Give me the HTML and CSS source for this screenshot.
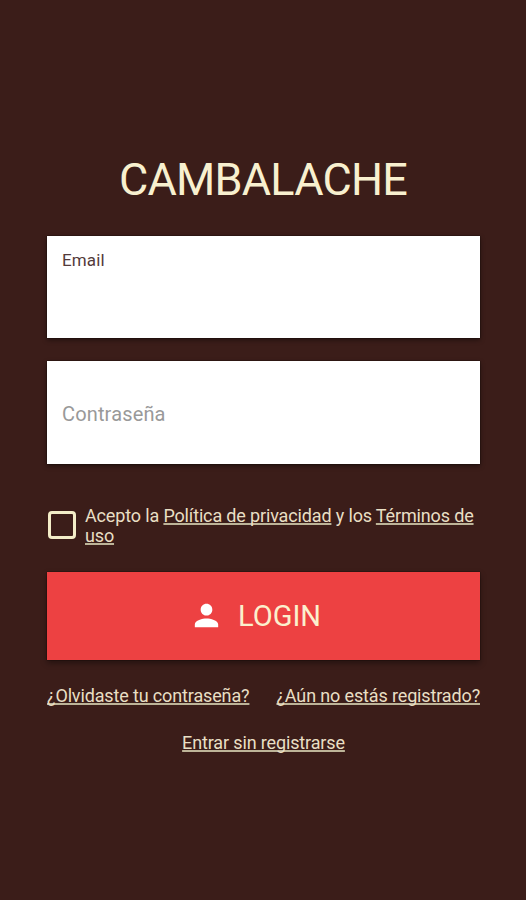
FILE: index.html
```html
<!DOCTYPE html>
<html lang="es">
<head>
<meta charset="utf-8">
<title>Cambalache</title>
<link rel="stylesheet" href="styles.css">
</head>
<body>
<main class="login">
  <h1 class="title">CAMBALACHE</h1>
  <div class="field"><label class="field-label">Email</label></div>
  <div class="field field-empty"><span class="placeholder">Contraseña</span></div>
  <div class="terms">
    <span class="checkbox"></span>
    <p class="terms-text">Acepto la <a>Política de privacidad</a> y los <a>Términos de<br>uso</a></p>
  </div>
  <button class="submit">
    <svg class="person" viewBox="0 0 24 24"><path d="M12 12c2.210 0 4-1.790 4-4s-1.790-4-4-4-4 1.790-4 4 1.790 4 4 4zm0 2c-2.670 0-8 1.340-8 4v2h16v-2c0-2.660-5.330-4-8-4z"/></svg>
    <span>LOGIN</span>
  </button>
  <nav class="links"><a>¿Olvidaste tu contraseña?</a><a>¿Aún no estás registrado?</a></nav>
  <nav class="guest"><a>Entrar sin registrarse</a></nav>
</main>
</body>
</html>
```
FILE: styles.css
```css
* { box-sizing: border-box; }
body {
  margin: 0;
  min-height: 900px;
  background: #3b1d19;
  color: #f8f0cf;
  font-family: Roboto, sans-serif;
}
.login { padding: 152px 46px 0 47px; }
.title {
  margin: 0 0 28px;
  padding-right: 1px;
  font-size: 45px;
  line-height: 56px;
  font-weight: 400;
  letter-spacing: -.8px;
  text-align: center;
}
.field {
  height: 102px;
  margin-bottom: 23px;
  padding: 15px;
  background: #fff;
  box-shadow: 0 2px 5px rgba(0, 0, 0, .45), 0 0 1px #000;
}
.field-label { display: block; margin-top: -1px; font-size: 17px; line-height: 20px; letter-spacing: .15px; color: #533a3b; }
.field-empty { display: flex; align-items: center; height: 103px; margin-bottom: 42px; }
.placeholder { font-size: 20px; letter-spacing: .15px; color: #999; padding-top: 2px; }
.terms { display: flex; align-items: center; gap: 9px; padding-left: 1px; height: 40px; }
.checkbox { flex: none; width: 28px; height: 28px; margin-top: -2px; border: 3px solid #f3edc8; border-radius: 4px; }
.terms-text { margin: 0; font-size: 18px; line-height: 20px; letter-spacing: -.15px; color: #e9dfc4; white-space: nowrap; }
a {
  color: #e9dfc4;
  text-decoration: underline 2px #bdb498;
  text-decoration-skip-ink: none;
  text-underline-offset: 1px;
}
.submit {
  display: flex;
  align-items: center;
  justify-content: center;
  gap: 14px;
  width: 100%;
  height: 88px;
  margin-top: 26px;
  padding: 0 17px 0 0;
  border: 0;
  background: #ed4142;
  box-shadow: 0 3px 6px rgba(0, 0, 0, .4), 0 0 1px #000;
  color: #fbf0cd;
  font: 400 29px/36px Roboto, sans-serif;
}
.person { width: 35px; height: 35px; margin-top: -2px; fill: #fff; }
.links { display: flex; justify-content: space-between; margin-top: 25px; font-size: 18px; line-height: 22px; letter-spacing: -.14px; }
.guest { margin-top: 25px; font-size: 18px; line-height: 22px; letter-spacing: -.14px; text-align: center; }
```
